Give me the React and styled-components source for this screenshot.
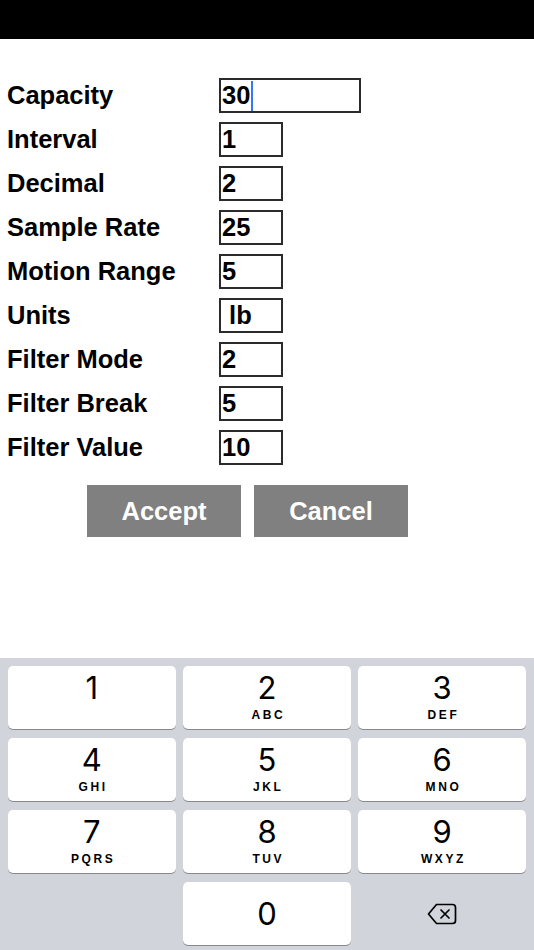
import { Fragment } from 'react';
import styled, { createGlobalStyle } from 'styled-components';

const GlobalStyle = createGlobalStyle`
  html, body {
    margin: 0;
    padding: 0;
    background: #fff;
  }
  * {
    box-sizing: border-box;
  }
`;

const Screen = styled.div`
  display: flex;
  flex-direction: column;
  height: 100vh;
  font-family: 'Liberation Sans', Arial, Helvetica, sans-serif;
  color: #000;
`;

const StatusBar = styled.div`
  height: 39px;
  background: #000;
  flex-shrink: 0;
`;

const Form = styled.div`
  display: grid;
  grid-template-columns: 212px auto;
  grid-auto-rows: 35px;
  row-gap: 9px;
  padding: 39px 7px 0 7px;
`;

const Label = styled.div`
  display: flex;
  align-items: center;
  font-size: 25.5px;
  font-weight: 700;
  white-space: nowrap;
`;

const Field = styled.div`
  display: flex;
  align-items: center;
  width: ${({ $wide }) => ($wide ? '142px' : '64px')};
  height: 35px;
  border: 2px solid #2b2b2b;
  padding-left: 1px;
  font-size: 25.5px;
  font-weight: 700;
  white-space: pre;
`;

const Caret = styled.span`
  display: inline-block;
  width: 2px;
  height: 30px;
  margin-left: 1px;
  background: #3478f6;
`;

const Actions = styled.div`
  display: flex;
  gap: 13px;
  padding: 20px 0 0 87px;
`;

const ActionButton = styled.button`
  width: 154px;
  height: 52px;
  border: none;
  background: #808080;
  color: #fff;
  font-family: 'Liberation Sans', Arial, Helvetica, sans-serif;
  font-size: 25.5px;
  font-weight: 700;
  padding: 0;
`;

const Keypad = styled.div`
  margin-top: auto;
  background: #d1d4da;
  padding: 8px 8px 5px 8px;
  display: grid;
  grid-template-columns: repeat(3, 1fr);
  grid-auto-rows: 63px;
  column-gap: 7.5px;
  row-gap: 9px;
`;

const Key = styled.div`
  display: flex;
  flex-direction: column;
  align-items: center;
  background: ${({ $blank }) => ($blank ? 'transparent' : '#fff')};
  border-radius: 5px;
  box-shadow: ${({ $blank }) => ($blank ? 'none' : '0 1px 0 #898a8d')};
  justify-content: ${({ $center }) => ($center ? 'center' : 'flex-start')};
`;

const Digit = styled.div`
  font-family: Inter, 'Liberation Sans', sans-serif;
  font-weight: 400;
  font-size: 31px;
  line-height: 32px;
  margin-top: ${({ $solo }) => ($solo ? '0' : '6px')};
`;

const Letters = styled.div`
  font-family: 'Liberation Sans', Arial, sans-serif;
  font-weight: 700;
  font-size: 12px;
  letter-spacing: 2.6px;
  margin-left: 2.6px;
  line-height: 14px;
  margin-top: 4px;
`;

const fields = [
  { label: 'Capacity', value: '30', wide: true, focus: true },
  { label: 'Interval', value: '1' },
  { label: 'Decimal', value: '2' },
  { label: 'Sample Rate', value: '25' },
  { label: 'Motion Range', value: '5' },
  { label: 'Units', value: ' lb' },
  { label: 'Filter Mode', value: '2' },
  { label: 'Filter Break', value: '5' },
  { label: 'Filter Value', value: '10' },
];

const keys = [
  ['1', ''],
  ['2', 'ABC'],
  ['3', 'DEF'],
  ['4', 'GHI'],
  ['5', 'JKL'],
  ['6', 'MNO'],
  ['7', 'PQRS'],
  ['8', 'TUV'],
  ['9', 'WXYZ'],
];

const DeleteIcon = () => (
  <svg width="30" height="22" viewBox="0 0 30 22" fill="none" stroke="#000" strokeWidth="1.7" strokeLinejoin="round" strokeLinecap="round">
    <path d="M9.5 1.5 H25.5 a3 3 0 0 1 3 3 V17.5 a3 3 0 0 1 -3 3 H9.5 L1.5 11 Z" />
    <path d="M14 7 L22 15 M22 7 L14 15" />
  </svg>
);

export default function App() {
  return (
    <>
      <GlobalStyle />
      <Screen>
        <StatusBar />
        <Form>
          {fields.map((f) => (
            <Fragment key={f.label}>
              <Label>{f.label}</Label>
              <div>
                <Field $wide={f.wide}>
                  {f.value}
                  {f.focus && <Caret />}
                </Field>
              </div>
            </Fragment>
          ))}
        </Form>
        <Actions>
          <ActionButton>Accept</ActionButton>
          <ActionButton>Cancel</ActionButton>
        </Actions>
        <Keypad>
          {keys.map(([d, l]) => (
            <Key key={d}>
              <Digit>{d}</Digit>
              {l && <Letters>{l}</Letters>}
            </Key>
          ))}
          <Key $blank />
          <Key $center>
            <Digit $solo>0</Digit>
          </Key>
          <Key $blank $center>
            <DeleteIcon />
          </Key>
        </Keypad>
      </Screen>
    </>
  );
}
